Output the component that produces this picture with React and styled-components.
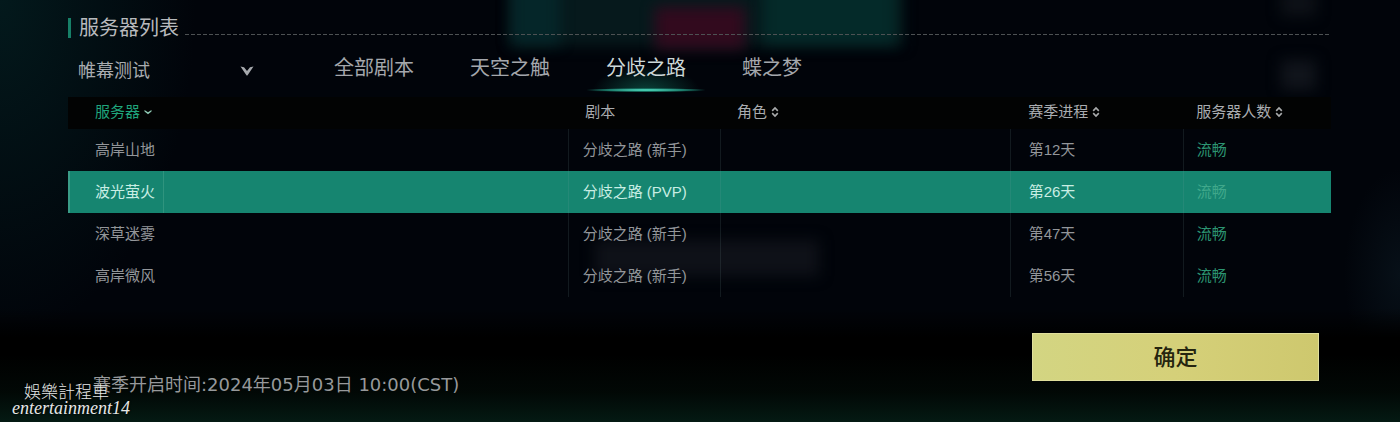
import React, { useState } from 'react';
import styled, { createGlobalStyle } from 'styled-components';

const tabs = ['全部剧本', '天空之触', '分歧之路', '蝶之梦'];

const columns = [
  { key: 'name', label: '服务器', width: '39.6%', pad: 27, sort: 'down' },
  { key: 'script', label: '剧本', width: '12.1%', pad: 14, headPad: 17 },
  { key: 'role', label: '角色', width: '22.9%', pad: 16, sort: 'both' },
  { key: 'day', label: '赛季进程', width: '13.7%', pad: 18, sort: 'both' },
  { key: 'load', label: '服务器人数', width: '11.7%', pad: 13, sort: 'both' },
];

const servers = [
  { name: '高岸山地', script: '分歧之路 (新手)', role: '', day: '第12天', load: '流畅' },
  { name: '波光萤火', script: '分歧之路 (PVP)', role: '', day: '第26天', load: '流畅' },
  { name: '深草迷雾', script: '分歧之路 (新手)', role: '', day: '第47天', load: '流畅' },
  { name: '高岸微风', script: '分歧之路 (新手)', role: '', day: '第56天', load: '流畅' },
];

const SortIcon = ({ type }) =>
  type === 'down' ? (
    <svg width="8" height="6" viewBox="0 0 8 6" aria-hidden="true">
      <path d="M0.5 1 4 3.2 7.5 1V2.4L4 5.2 0.5 2.4Z" fill="#8fc9b4" />
    </svg>
  ) : (
    <svg width="8" height="12" viewBox="0 0 8 12" aria-hidden="true">
      <path
        d="M1.2 4.9 4 2 6.8 4.9M1.2 7.1 4 10 6.8 7.1"
        fill="none"
        stroke="#a9abac"
        strokeWidth="1.6"
      />
    </svg>
  );

const App = () => {
  const [tab, setTab] = useState('分歧之路');
  const [selected, setSelected] = useState('波光萤火');

  return (
    <Page>
      <GlobalStyle />
      <Backdrop aria-hidden="true">
        <Blur $left="36.5%" $width="28%" $top="-20px" $height="66px" $color="#06191c" />
        <Blur $left="36.5%" $width="3.5%" $top="-20px" $height="64px" $color="#052629" />
        <Blur $left="54.5%" $width="9.5%" $top="-20px" $height="64px" $color="#042a29" />
        <Blur $left="46.8%" $width="6.4%" $top="7px" $height="42px" $color="#320a1e" />
        <Blur $left="42.5%" $width="16%" $top="240px" $height="36px" $color="#0e1118" />
        <Blur $left="91.5%" $width="2.5%" $top="60px" $height="30px" $color="#10141b" />
        <Blur $left="91.5%" $width="2.5%" $top="-10px" $height="26px" $color="#0d1117" />
      </Backdrop>

      <TitleRow>
        <Title>服务器列表</Title>
        <Dashes />
      </TitleRow>

      <Toolbar>
        <SelectBox>
          <Select aria-label="服务器分组" defaultValue="帷幕测试">
            <option>帷幕测试</option>
          </Select>
          <svg width="14" height="12" viewBox="0 0 14 12" aria-hidden="true">
            <path d="M0.5 1.5 4 2.2 7 6 10 2.2 13.5 1.5 7.4 10.5H6.6Z" fill="#a6a9ad" />
          </svg>
        </SelectBox>
        <Tabs role="tablist">
          {tabs.map((item) => (
            <Tab
              key={item}
              type="button"
              role="tab"
              aria-selected={tab === item}
              $active={tab === item}
              onClick={() => setTab(item)}
            >
              {item}
            </Tab>
          ))}
        </Tabs>
      </Toolbar>

      <Table>
        <colgroup>
          {columns.map((col) => (
            <Col key={col.key} $width={col.width} />
          ))}
        </colgroup>
        <thead>
          <tr>
            {columns.map((col) => (
              <HeadCell key={col.key} $pad={col.headPad || col.pad} scope="col">
                {col.sort ? (
                  <SortButton type="button" $active={col.sort === 'down'}>
                    {col.label}
                    <SortIcon type={col.sort} />
                  </SortButton>
                ) : (
                  col.label
                )}
              </HeadCell>
            ))}
          </tr>
        </thead>
        <tbody>
          {servers.map((server) => (
            <Row
              key={server.name}
              $selected={selected === server.name}
              onClick={() => setSelected(server.name)}
            >
              {columns.map((col) => (
                <Cell key={col.key} $pad={col.pad} $load={col.key === 'load'}>
                  {server[col.key]}
                </Cell>
              ))}
            </Row>
          ))}
        </tbody>
      </Table>

      <Footer>
        <StartTime>赛季开启时间:2024年05月03日 10:00(CST)</StartTime>
        <Confirm type="button">确定</Confirm>
      </Footer>

      <Watermark>
        <WatermarkName>娛樂計程車</WatermarkName>
        <WatermarkId>entertainment14</WatermarkId>
      </Watermark>
    </Page>
  );
};

export default App;

const GlobalStyle = createGlobalStyle`
  body {
    margin: 0;
    background: #010308;
  }
  * {
    box-sizing: border-box;
  }
  button,
  select {
    font-family: inherit;
    padding: 0;
    border: none;
    background: none;
    cursor: pointer;
  }
`;

const Page = styled.main`
  position: relative;
  isolation: isolate;
  min-height: 100vh;
  padding: 16px 69px 25px 68px;
  color: #a9acb0;
  font-family: 'Liberation Sans', 'Noto Sans CJK SC', sans-serif;
  background:
    linear-gradient(to top, #041a13 0%, rgba(2, 10, 7, 0.8) 7%, transparent 16%),
    linear-gradient(to top, #000 20%, transparent 27%),
    radial-gradient(ellipse 4% 25% at 100% 65%, #071018 0%, transparent 100%),
    radial-gradient(ellipse 14% 80% at 0% 0%, #03191c 0%, transparent 100%),
    #01040a;
`;

const Backdrop = styled.div`
  position: absolute;
  inset: 0;
  z-index: -1;
  overflow: hidden;
`;

const Blur = styled.div`
  position: absolute;
  left: ${({ $left }) => $left};
  top: ${({ $top }) => $top};
  width: ${({ $width }) => $width};
  height: ${({ $height }) => $height};
  background: ${({ $color }) => $color};
  filter: blur(7px);
`;

const TitleRow = styled.header`
  display: flex;
  align-items: center;
  gap: 6px;
  height: 24px;
`;

const Title = styled.h1`
  margin: 0;
  padding-left: 8px;
  border-left: 3px solid #178068;
  color: #b8babd;
  font-size: 20px;
  font-weight: 400;
  line-height: 20px;
`;

const Dashes = styled.div`
  flex: 1;
  align-self: flex-end;
  height: 1px;
  margin-bottom: 5px;
  background: repeating-linear-gradient(to right, #4d5153 0 4px, transparent 4px 6px);
`;

const Toolbar = styled.div`
  display: flex;
  padding: 10px 0 5px;
`;

const SelectBox = styled.div`
  display: flex;
  align-items: center;
  width: 210px;
  height: 42px;
  svg {
    margin-left: -38px;
    pointer-events: none;
  }
`;

const Select = styled.select`
  appearance: none;
  width: 100%;
  height: 42px;
  padding: 0 40px 0 10px;
  color: #a9acb0;
  font-size: 18px;
`;

const Tabs = styled.div`
  display: flex;
  flex: 1;
  gap: 56px;
  padding-left: 56px;
`;

const Tab = styled.button`
  position: relative;
  height: 42px;
  padding-bottom: 10px;
  color: ${({ $active }) => ($active ? '#cdd8d8' : '#a4a7ac')};
  font-size: 20px;
  white-space: nowrap;
  &::before {
    content: '';
    display: ${({ $active }) => ($active ? 'block' : 'none')};
    position: absolute;
    inset: 16px -20px 0;
    z-index: -1;
    background: radial-gradient(ellipse 45% 100% at 50% 100%, rgba(20, 130, 105, 0.5), transparent);
  }
  &::after {
    content: '';
    display: ${({ $active }) => ($active ? 'block' : 'none')};
    position: absolute;
    inset: auto -22px 0;
    height: 4px;
    background: radial-gradient(ellipse at center, #4fdcc0 10%, #1c7d6c 45%, transparent 70%);
  }
`;

const Table = styled.table`
  width: 100%;
  table-layout: fixed;
  border-collapse: collapse;
  font-size: 15px;
`;

const Col = styled.col`
  width: ${({ $width }) => $width};
`;

const HeadCell = styled.th`
  height: 32px;
  padding: 0 0 2px ${({ $pad }) => $pad}px;
  background: #020303;
  font-weight: 400;
  line-height: 20px;
  text-align: left;
`;

const SortButton = styled.button`
  display: flex;
  align-items: center;
  gap: 4px;
  color: ${({ $active }) => ($active ? '#1fa57c' : '#a9acb0')};
  font-size: 15px;
  line-height: 20px;
`;

const Cell = styled.td`
  height: 42px;
  padding: 0 0 0 ${({ $pad }) => $pad}px;
  color: ${({ $load }) => ($load ? '#2c9572' : '#93969a')};
  line-height: 20px;
  white-space: nowrap;
  & + & {
    border-left: 1px solid rgba(130, 160, 160, 0.14);
  }
`;

const Row = styled.tr`
  cursor: pointer;
  background: ${({ $selected }) =>
    $selected
      ? 'linear-gradient(to right, #3a9c87 2px, transparent 2px 95px, #2f947e 95px 96px, transparent 96px), #168570'
      : 'none'};
  ${Cell} {
    ${({ $selected }) => $selected && 'color: #c9eee4;'}
  }
  ${Cell}:last-child {
    ${({ $selected }) => $selected && 'color: #40a88b;'}
  }
`;

const Footer = styled.footer`
  display: flex;
  align-items: flex-start;
  justify-content: space-between;
  padding: 36px 12px 0 25px;
`;

const StartTime = styled.p`
  margin: 40px 0 0;
  color: #97999b;
  font-family: 'DejaVu Sans', 'Noto Sans CJK SC', sans-serif;
  font-size: 18px;
  line-height: 24px;
`;

const Confirm = styled.button`
  width: 287px;
  height: 48px;
  padding-bottom: 4px;
  border: 1px solid #e0df9c;
  background: linear-gradient(to right, #d3d582, #d5d079 50%, #cec86e);
  color: #25250f;
  font-size: 22px;
  font-weight: 500;
`;

const Watermark = styled.div`
  position: absolute;
  left: 12px;
  bottom: 6px;
  color: #e6e8e8;
  text-shadow: 0 0 2px #000;
`;

const WatermarkName = styled.div`
  padding-left: 12px;
  font-family: 'Noto Sans CJK TC', sans-serif;
  font-size: 17px;
  font-weight: 300;
  line-height: 18px;
`;

const WatermarkId = styled.div`
  font-family: 'Liberation Serif', serif;
  font-size: 18px;
  font-style: italic;
  line-height: 16px;
`;
